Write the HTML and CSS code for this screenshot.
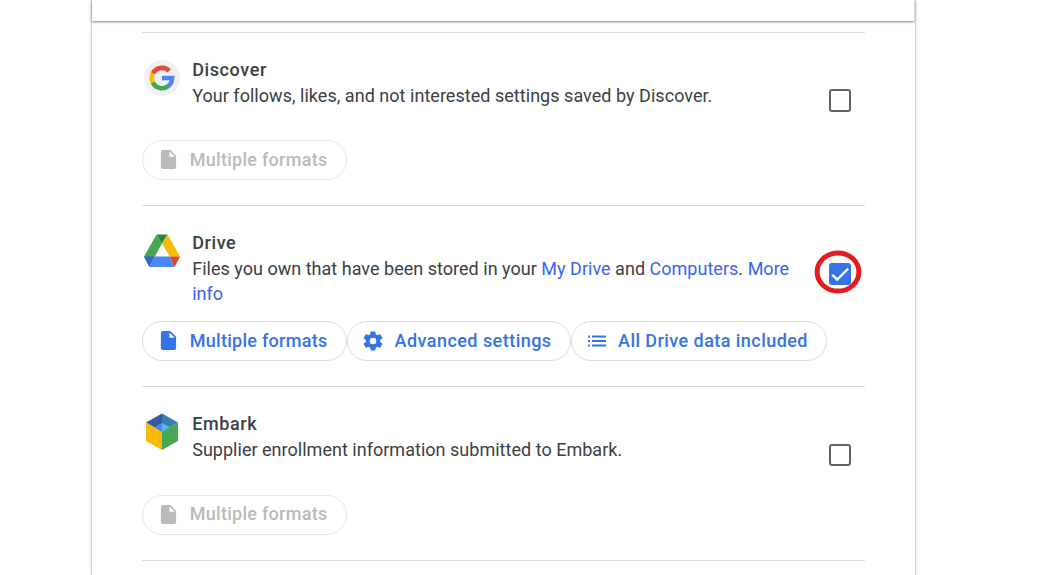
FILE: index.html
```html
<!DOCTYPE html>
<html lang="en">
<head>
<meta charset="utf-8">
<title>Select data to include</title>
<link rel="stylesheet" href="styles.css">
</head>
<body>
<main class="card">
  <header class="card-header"></header>
  <section class="product first">
    <div class="summary">
      <svg class="logo" viewBox="0 0 36 36">
        <circle cx="18" cy="18" r="18" fill="#f1f1f1"/>
        <g fill="none" stroke-width="4.6">
          <path d="M25.2 10.9A10.2 10.2 0 0 0 8.8 13.6" stroke="#e34a3c"/>
          <path d="M9 13.3A10.2 10.2 0 0 0 9 22.7" stroke="#fbbc05"/>
          <path d="M8.8 22.4A10.2 10.2 0 0 0 24.2 26.1" stroke="#45a752"/>
          <path d="M23.9 26.3A10.2 10.2 0 0 0 28.1 18H18" stroke="#4f86f5"/>
        </g>
      </svg>
      <div class="info">
        <h2 class="name">Discover</h2>
        <p class="text">Your follows, likes, and not interested settings saved by Discover.</p>
      </div>
      <span class="checkbox"></span>
    </div>
    <div class="chips">
      <button class="chip formats" disabled><svg class="icon file" viewBox="0 0 16 20"><path d="M2 0H10L16 6V18Q16 20 14 20H2Q0 20 0 18V2Q0 0 2 0ZM9 1.6V7H14.6Z" fill-rule="evenodd"/></svg><span>Multiple formats</span></button>
    </div>
  </section>
  <section class="product selected">
    <div class="summary">
      <svg class="logo" viewBox="0 0 36 36">
        <path d="M12.6 2 0 24 5.3 34 18 11Z" fill="#47a650"/>
        <path d="M12.6 2H23.5L18 11Z" fill="#27823b"/>
        <path d="M23.5 2 36 24H25.7L18 11Z" fill="#f6bc06"/>
        <path d="M0 24H10.7L5.3 34.5Z" fill="#3167d5"/>
        <path d="M10.7 24H25.7L30.7 34.5H5.3Z" fill="#4e86f5"/>
        <path d="M25.7 24H36L30.7 34.5Z" fill="#e1432d"/>
      </svg>
      <div class="info">
        <h2 class="name">Drive</h2>
        <p class="text">Files you own that have been stored in your <a>My Drive</a> and <a>Computers</a>. <a>More info</a></p>
      </div>
      <span class="checkbox checked">
        <svg class="tick" viewBox="0 0 22 22"><path d="M3.2 11.7 8.2 16.6 19.2 5.6"/></svg>
        <svg class="highlight" viewBox="0 0 48 44"><ellipse cx="24" cy="22" rx="20.9" ry="19.1"/></svg>
      </span>
    </div>
    <div class="chips">
      <button class="chip formats"><svg class="icon file" viewBox="0 0 16 20"><path d="M2 0H10L16 6V18Q16 20 14 20H2Q0 20 0 18V2Q0 0 2 0ZM9 1.6V7H14.6Z" fill-rule="evenodd"/></svg><span>Multiple formats</span></button>
      <button class="chip advanced"><svg class="icon gear" viewBox="2 2 20 20"><path d="M19.14 12.94c.04-.3.06-.61.06-.94 0-.32-.02-.64-.07-.94l2.03-1.58a.49.49 0 0 0 .12-.61l-1.92-3.32a.488.488 0 0 0-.59-.22l-2.39.96c-.5-.38-1.03-.7-1.62-.94l-.36-2.54a.484.484 0 0 0-.48-.41h-3.84c-.24 0-.43.17-.47.41l-.36 2.54c-.59.24-1.13.57-1.62.94l-2.39-.96c-.22-.08-.47 0-.59.22L2.74 8.87c-.12.21-.08.47.12.61l2.03 1.58c-.05.3-.09.63-.09.94s.02.64.07.94l-2.03 1.58a.49.49 0 0 0-.12.61l1.92 3.32c.12.22.37.29.59.22l2.39-.96c.5.38 1.03.7 1.62.94l.36 2.54c.05.24.24.41.48.41h3.84c.24 0 .44-.17.47-.41l.36-2.54c.59-.24 1.13-.56 1.62-.94l2.39.96c.22.08.47 0 .59-.22l1.92-3.32c.12-.22.07-.47-.12-.61l-2.01-1.58zM12 15.3a3.3 3.3 0 1 1 0-6.6 3.3 3.3 0 0 1 0 6.6z"/></svg><span>Advanced settings</span></button>
      <button class="chip included"><svg class="icon list" viewBox="0 0 18 12"><path d="M0 .5H2V2.5H0ZM4 .5H18V2.5H4ZM0 5H2V7H0ZM4 5H18V7H4ZM0 9.5H2V11.5H0ZM4 9.5H18V11.5H4Z"/></svg><span>All Drive data included</span></button>
    </div>
  </section>
  <section class="product last">
    <div class="summary">
      <svg class="logo" viewBox="0 0 36 36">
        <path d="M18 0 2 9 18 18.5Z" fill="#345aa5"/>
        <path d="M18 0 34 9 18 18.5Z" fill="#3b7fae"/>
        <path d="M18 9.5 10 13.8 18 18.5Z" fill="#4e86f5"/>
        <path d="M18 9.5 26 13.8 18 18.5Z" fill="#56b6f7"/>
        <path d="M2 9 18 18.2V36.5L2 27.5Z" fill="#f8bb05"/>
        <path d="M34 9 18 18.2V36.5L34 27.5Z" fill="#4aa852"/>
      </svg>
      <div class="info">
        <h2 class="name">Embark</h2>
        <p class="text">Supplier enrollment information submitted to Embark.</p>
      </div>
      <span class="checkbox"></span>
    </div>
    <div class="chips">
      <button class="chip formats" disabled><svg class="icon file" viewBox="0 0 16 20"><path d="M2 0H10L16 6V18Q16 20 14 20H2Q0 20 0 18V2Q0 0 2 0ZM9 1.6V7H14.6Z" fill-rule="evenodd"/></svg><span>Multiple formats</span></button>
    </div>
  </section>
</main>
</body>
</html>
```
FILE: styles.css
```css
* { box-sizing: border-box; }
body {
  margin: 0;
  background: #fff;
  color: #3c4043;
  font: 18px/25px Roboto, sans-serif;
}
.card {
  display: flow-root;
  width: 825px;
  height: 575px;
  margin-left: 91px;
  border: solid #d5d7d8;
  border-width: 0 1px;
  box-shadow: 0 0 3px rgba(60, 64, 67, .16);
}
.card-header {
  height: 21px;
  margin: 0 1px 11px 0;
  box-shadow: 0 1px 2px rgba(60, 64, 67, .55), 0 1px 4px rgba(60, 64, 67, .15);
}
.product {
  width: 723px;
  height: 173px;
  margin-left: 50px;
  padding-top: 25px;
  border-top: 1px solid #dadce0;
}
.product.selected { height: 181px; }
.product.last {
  height: 175px;
  border-bottom: 1px solid #dadce0;
}
.summary {
  display: flex;
  height: 82px;
  padding-left: 2px;
}
.selected .summary { height: 90px; }
.last .summary { height: 83px; }
.logo {
  flex: none;
  width: 36px;
  height: 37px;
  margin: 1px 12.2px 0 0;
}
.first .logo { height: 38px; }
.info { width: 609.8px; }
.name {
  margin: -1px 0 1px;
  font: 500 18px/25px Roboto, sans-serif;
  letter-spacing: .6px;
}
.text { margin: 0; color: #3c4043; letter-spacing: .02px; }
.first .text { letter-spacing: .035px; }
.text a { color: #3b63f5; }
.checkbox {
  position: relative;
  flex: none;
  width: 22px;
  height: 23px;
  margin: 31px 0 0 27px;
  border: 2px solid #5f6368;
  border-radius: 3px;
}
.last .checkbox { height: 22px; margin-top: 32px; }
.checkbox.checked { height: 22px; margin-top: 32px; border: 0; background: #3474e8; }
.tick { display: block; width: 22px; height: 22px; }
.tick path { fill: none; stroke: #fff; stroke-width: 2.3; }
.highlight {
  position: absolute;
  left: -15px;
  top: -13px;
  width: 48px;
  height: 44px;
}
.highlight ellipse { fill: none; stroke: #e51c20; stroke-width: 5; }
.chips { display: flex; }
.chip {
  display: flex;
  align-items: center;
  height: 40px;
  padding: 0 0 1px 17px;
  border: 1px solid #dadce0;
  border-radius: 20px;
  background: #fff;
  color: #3474e8;
  font: 500 18px/24px Roboto, sans-serif;
  letter-spacing: .27px;
  white-space: nowrap;
}
.chip:disabled { color: #b9babb; border-color: #e6e7e8; }
.last .chip span { margin-top: -1px; padding-bottom: 1px; }
.formats { width: 205px; }
.advanced { width: 224px; padding-left: 15px; letter-spacing: .46px; }
.included { width: 256px; padding-left: 16px; letter-spacing: .44px; }
.icon { flex: none; fill: currentColor; }
.file { width: 17px; height: 19px; margin-right: 12.8px; }
.gear { width: 20px; height: 20px; margin-right: 11.5px; }
.list { width: 18px; height: 12px; margin-right: 12px; }
```
